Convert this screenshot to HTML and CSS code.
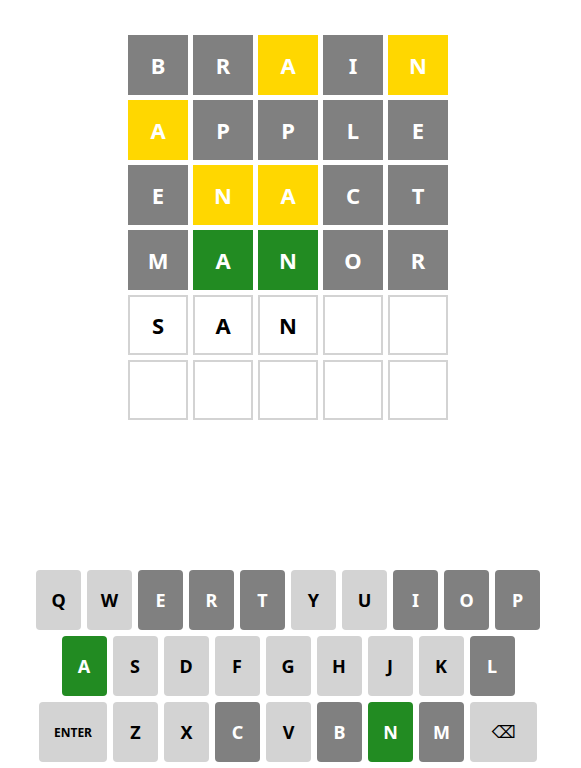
FILE: index.html
```html
<!DOCTYPE html>
<html lang="en">
<head>
<meta charset="utf-8">
<title>Wordle</title>
<link rel="stylesheet" href="styles.css">
</head>
<body>
<main class="app">
  <div class="board">
    <div class="row">
      <div class="tile absent">B</div><div class="tile absent">R</div><div class="tile present">A</div><div class="tile absent">I</div><div class="tile present">N</div>
    </div>
    <div class="row">
      <div class="tile present">A</div><div class="tile absent">P</div><div class="tile absent">P</div><div class="tile absent">L</div><div class="tile absent">E</div>
    </div>
    <div class="row">
      <div class="tile absent">E</div><div class="tile present">N</div><div class="tile present">A</div><div class="tile absent">C</div><div class="tile absent">T</div>
    </div>
    <div class="row">
      <div class="tile absent">M</div><div class="tile correct">A</div><div class="tile correct">N</div><div class="tile absent">O</div><div class="tile absent">R</div>
    </div>
    <div class="row">
      <div class="tile empty">S</div><div class="tile empty">A</div><div class="tile empty">N</div><div class="tile empty"></div><div class="tile empty"></div>
    </div>
    <div class="row">
      <div class="tile empty"></div><div class="tile empty"></div><div class="tile empty"></div><div class="tile empty"></div><div class="tile empty"></div>
    </div>
  </div>

  <div class="keyboard">
    <div class="krow">
      <button class="key">Q</button><button class="key">W</button><button class="key k-absent">E</button><button class="key k-absent">R</button><button class="key k-absent">T</button><button class="key">Y</button><button class="key">U</button><button class="key k-absent">I</button><button class="key k-absent">O</button><button class="key k-absent">P</button>
    </div>
    <div class="krow">
      <button class="key k-correct">A</button><button class="key">S</button><button class="key">D</button><button class="key">F</button><button class="key">G</button><button class="key">H</button><button class="key">J</button><button class="key">K</button><button class="key k-absent">L</button>
    </div>
    <div class="krow">
      <button class="key wide enter">ENTER</button><button class="key">Z</button><button class="key">X</button><button class="key k-absent">C</button><button class="key">V</button><button class="key k-absent">B</button><button class="key k-correct">N</button><button class="key k-absent">M</button><button class="key wide back">⌫</button>
    </div>
  </div>
</main>
</body>
</html>
```

FILE: styles.css
```css
html, body {
  margin: 0;
  padding: 0;
  background: #ffffff;
}

body {
  font-family: "Noto Sans", "Open Sans", "DejaVu Sans", sans-serif;
}

.app {
  width: 576px;
  height: 768px;
  display: flex;
  flex-direction: column;
  align-items: center;
}

.board {
  margin-top: 35px;
  display: flex;
  flex-direction: column;
  gap: 5px;
}

.row {
  display: flex;
  gap: 5px;
}

.tile {
  width: 60px;
  height: 60px;
  box-sizing: border-box;
  display: flex;
  align-items: center;
  justify-content: center;
  font-size: 22px;
  font-weight: 700;
  color: #ffffff;
}

.absent { background: #808080; }
.present { background: #ffd700; }
.correct { background: #228b22; }

.empty {
  background: #ffffff;
  border: 2px solid #d3d3d3;
  color: #000000;
}

.keyboard {
  margin-top: auto;
  margin-bottom: 6px;
  display: flex;
  flex-direction: column;
  gap: 6px;
  align-items: center;
}

.krow {
  display: flex;
  gap: 6px;
}

.key {
  width: 45px;
  height: 60px;
  border: none;
  border-radius: 4px;
  padding: 0;
  background: #d3d3d3;
  color: #000000;
  font-family: "Noto Sans", "Open Sans", "DejaVu Sans", sans-serif;
  font-size: 18px;
  font-weight: 700;
  display: flex;
  align-items: center;
  justify-content: center;
}

.key.wide {
  width: 68px;
}

.key.back {
  width: 67px;
  font-weight: 400;
  font-size: 17px;
  font-family: "DejaVu Sans", sans-serif;
}

.key.enter {
  font-size: 12px;
}

.k-absent { background: #808080; color: #ffffff; }
.k-correct { background: #228b22; color: #ffffff; }
```
